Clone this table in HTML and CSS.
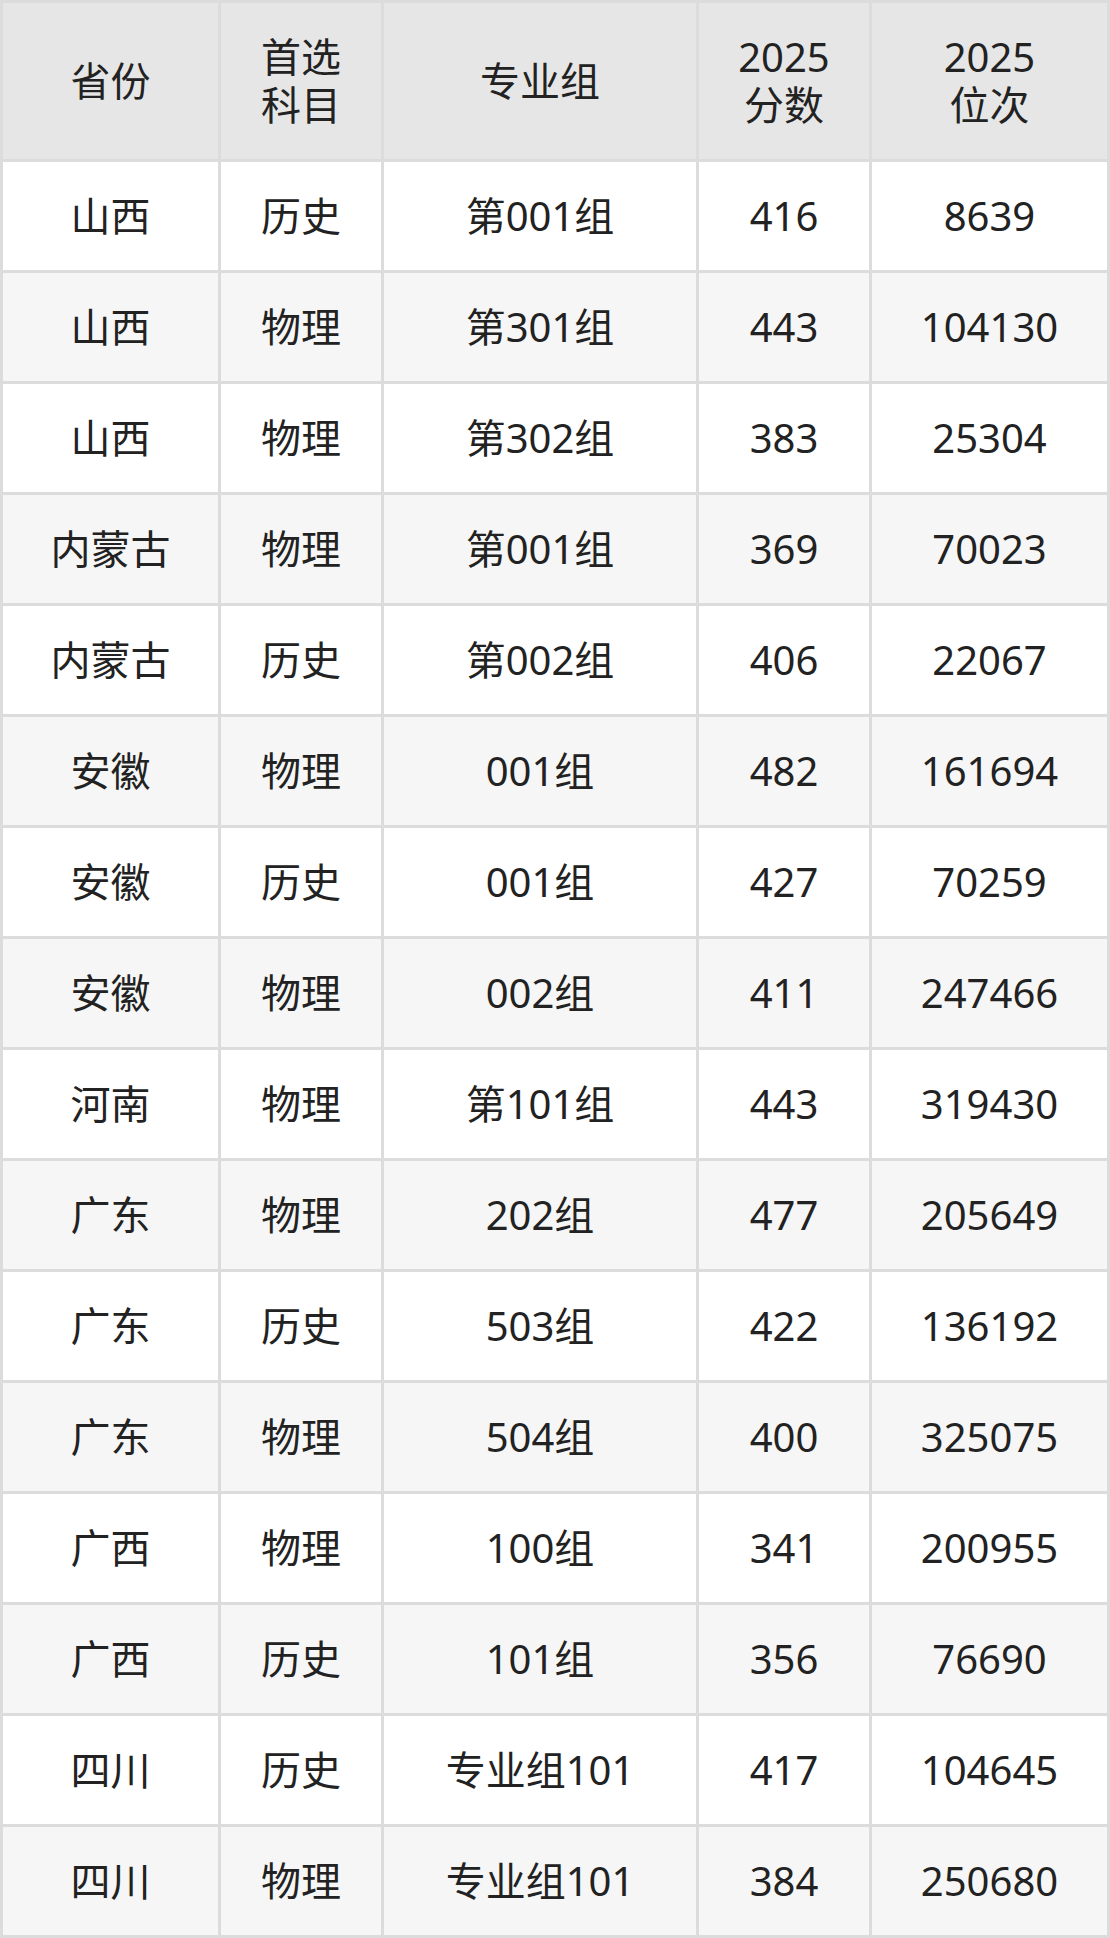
FILE: index.html
```html
<!DOCTYPE html>
<html lang="zh-CN">
<head>
<meta charset="utf-8">
<title>分数位次</title>
<link rel="stylesheet" href="styles.css">
</head>
<body>
<table class="score-table">
  <colgroup>
    <col class="c1"><col class="c2"><col class="c3"><col class="c4"><col class="c5">
  </colgroup>
  <thead>
    <tr>
      <th>省份</th>
      <th>首选<br>科目</th>
      <th>专业组</th>
      <th>2025<br>分数</th>
      <th>2025<br>位次</th>
    </tr>
  </thead>
  <tbody>
    <tr><td>山西</td><td>历史</td><td>第001组</td><td>416</td><td>8639</td></tr>
    <tr><td>山西</td><td>物理</td><td>第301组</td><td>443</td><td>104130</td></tr>
    <tr><td>山西</td><td>物理</td><td>第302组</td><td>383</td><td>25304</td></tr>
    <tr><td>内蒙古</td><td>物理</td><td>第001组</td><td>369</td><td>70023</td></tr>
    <tr><td>内蒙古</td><td>历史</td><td>第002组</td><td>406</td><td>22067</td></tr>
    <tr><td>安徽</td><td>物理</td><td>001组</td><td>482</td><td>161694</td></tr>
    <tr><td>安徽</td><td>历史</td><td>001组</td><td>427</td><td>70259</td></tr>
    <tr><td>安徽</td><td>物理</td><td>002组</td><td>411</td><td>247466</td></tr>
    <tr><td>河南</td><td>物理</td><td>第101组</td><td>443</td><td>319430</td></tr>
    <tr><td>广东</td><td>物理</td><td>202组</td><td>477</td><td>205649</td></tr>
    <tr><td>广东</td><td>历史</td><td>503组</td><td>422</td><td>136192</td></tr>
    <tr><td>广东</td><td>物理</td><td>504组</td><td>400</td><td>325075</td></tr>
    <tr><td>广西</td><td>物理</td><td>100组</td><td>341</td><td>200955</td></tr>
    <tr><td>广西</td><td>历史</td><td>101组</td><td>356</td><td>76690</td></tr>
    <tr><td>四川</td><td>历史</td><td>专业组101</td><td>417</td><td>104645</td></tr>
    <tr><td>四川</td><td>物理</td><td>专业组101</td><td>384</td><td>250680</td></tr>
  </tbody>
</table>
</body>
</html>
```

FILE: styles.css
```css
html, body {
  margin: 0;
  padding: 0;
  background: #ffffff;
}

.score-table {
  width: 1110px;
  table-layout: fixed;
  border-collapse: separate;
  border-spacing: 3px;
  background: #dcdcdc;
  font-family: "Noto Sans", "Noto Sans CJK SC", sans-serif;
  font-size: 40px;
  color: #222222;
}

.c1 { width: 215px; }
.c2 { width: 160px; }
.c3 { width: 312px; }
.c4 { width: 170px; }
.c5 { width: 235px; }

.score-table th,
.score-table td {
  padding: 0;
  text-align: center;
  vertical-align: middle;
  font-weight: normal;
}

.score-table th {
  height: 156px;
  line-height: 48px;
  background: #e6e6e6;
}

.score-table thead tr th {
  box-shadow: none;
}

.score-table td {
  height: 108px;
  line-height: 48px;
  background: #ffffff;
}

.score-table tbody tr:nth-child(even) td {
  background: #f6f6f6;
}
```
